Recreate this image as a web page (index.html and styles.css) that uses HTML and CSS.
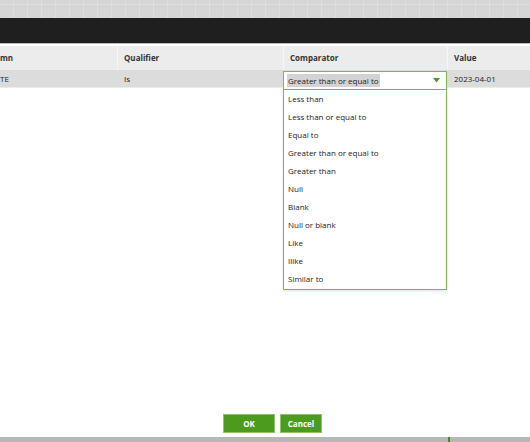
FILE: index.html
```html
<!DOCTYPE html>
<html>
<head>
<meta charset="utf-8">
<link rel="stylesheet" href="styles.css">
</head>
<body>
<div class="page">
  <div class="topgrid"></div>
  <div class="titlebar"></div>
  <div class="table">
    <div class="row head">
      <div class="cell c1">mn</div>
      <div class="cell c2">Qualifier</div>
      <div class="cell c3">Comparator</div>
      <div class="cell c4">Value</div>
    </div>
    <div class="row data">
      <div class="cell c1">TE</div>
      <div class="cell c2">Is</div>
      <div class="cell c3 selcell">
        <div class="select">
          <span class="seltext">Greater than or equal to</span>
          <svg class="arrow" width="7" height="5" viewBox="0 0 7 5"><path d="M0 0H7L3.5 4.5Z" fill="#4c9a22"/></svg>
        </div>
        <ul class="menu">
          <li>Less than</li>
          <li>Less than or equal to</li>
          <li>Equal to</li>
          <li>Greater than or equal to</li>
          <li>Greater than</li>
          <li>Null</li>
          <li>Blank</li>
          <li>Null or blank</li>
          <li>Like</li>
          <li>Ilike</li>
          <li>Similar to</li>
        </ul>
      </div>
      <div class="cell c4">2023-04-01</div>
    </div>
  </div>
  <div class="filler"></div>
  <div class="buttons">
    <button class="btn ok">OK</button>
    <button class="btn cancel">Cancel</button>
  </div>
  <div class="bottomline"><span class="mark"></span></div>
</div>
</body>
</html>
```

FILE: styles.css
```css
* { box-sizing: border-box; }
html, body { margin: 0; padding: 0; background: #fff; }
body { font-family: "Open Sans", "Liberation Sans", sans-serif; font-size: 8px; color: #222; }
.page { width: 530px; height: 442px; display: flex; flex-direction: column; overflow: hidden; }
.topgrid {
  height: 18px; flex: none;
  background-color: #d6d6d6;
  background-image:
    repeating-linear-gradient(90deg, transparent 0 13px, #dedede 13px 14px),
    repeating-linear-gradient(0deg, transparent 0 13px, #dedede 13px 14px);
}
.titlebar { height: 26px; flex: none; background: #1f1f1f; border-bottom: 1px solid #bcbcbc; }
.table { margin-top: 2px; flex: none; }
.row { display: flex; }
.head { height: 24px; background: #ececec; font-weight: 700; color: #333; }
.data { height: 18px; background: #dcdcdc; border-bottom: 1px solid #e6f0dc; }
.cell { display: flex; align-items: center; padding-left: 7px; padding-bottom: 1px; }
.head .cell + .cell { border-left: 1px solid #f6f6f6; padding-left: 6px; }
.c1 { width: 117px; padding-left: 0; }
.c2 { width: 166px; }
.c3 { width: 164px; }
.c4 { flex: 1; }
.selcell { position: relative; padding-left: 0; padding-bottom: 0; align-items: flex-start; }
.select {
  width: 164px; height: 19px; margin-top: 1px;
  background: #fff; border: 1px solid #78b84e;
  display: flex; align-items: center; padding: 0 4px 1px 3px;
}
.seltext { background: #d3d3d3; padding: 1px 1px; line-height: 11px; }
.arrow { margin-left: auto; margin-right: 2px; margin-top: 1px; }
.menu {
  position: absolute; left: 0; top: 19px; width: 164px;
  margin: 0; padding: 0; list-style: none;
  background: #fff; border: 1px solid #78b84e;
  box-shadow: 0 1px 2px rgba(0,0,0,0.12);
  z-index: 2;
}
.menu li { height: 18.1px; display: flex; align-items: center; padding-left: 4px; padding-bottom: 2px; }
.filler { flex: 1; }
.buttons { display: flex; gap: 5px; padding-left: 223px; flex: none; }
.btn {
  height: 19px; border: 1px solid #8ec56a; background: #4c9b1e; color: #fff;
  font-family: "Open Sans", "Liberation Sans", sans-serif; font-weight: 700; font-size: 8px;
  padding: 0; cursor: pointer;
}
.ok { width: 52px; }
.cancel { width: 42px; }
.bottomline { height: 5px; margin-top: 4px; background: #b7b7b7; flex: none; position: relative; }
.mark { position: absolute; left: 448px; top: 0; width: 2px; height: 5px; background: #3f8f1e; }
```
